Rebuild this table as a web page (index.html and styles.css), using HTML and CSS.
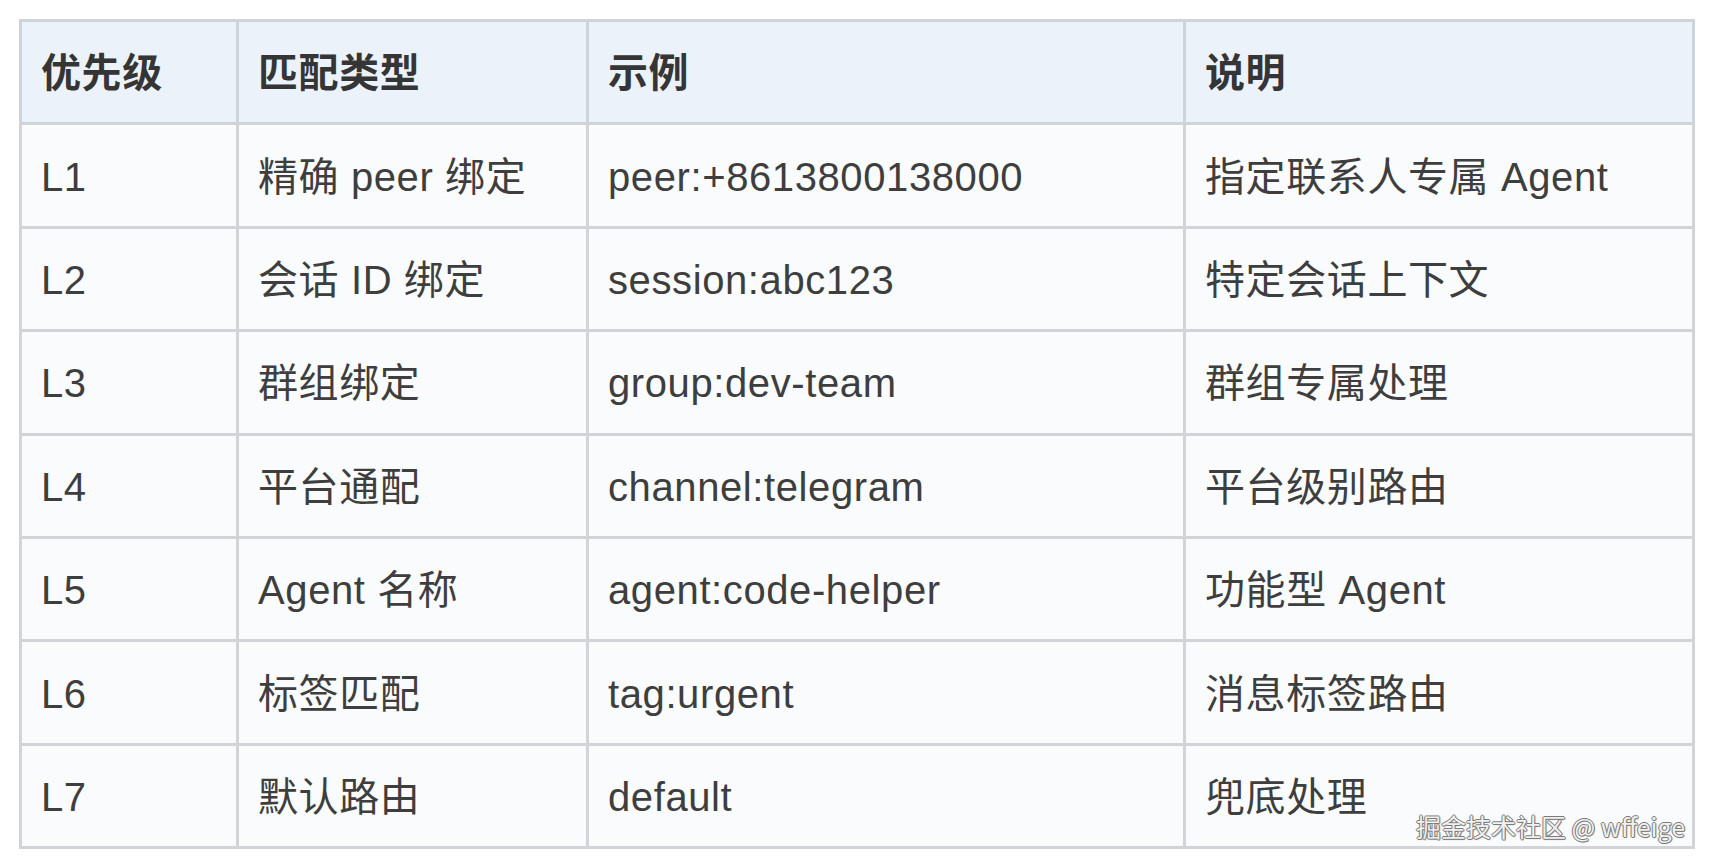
FILE: index.html
```html
<!DOCTYPE html>
<html lang="zh-CN">
<head>
<meta charset="utf-8">
<title>路由优先级</title>
<link rel="stylesheet" href="styles.css">
</head>
<body>
<div class="wrap">
  <table class="route-table">
    <colgroup>
      <col class="c1"><col class="c2"><col class="c3"><col class="c4">
    </colgroup>
    <thead>
      <tr><th>优先级</th><th>匹配类型</th><th>示例</th><th>说明</th></tr>
    </thead>
    <tbody>
      <tr><td>L1</td><td>精确 peer 绑定</td><td>peer:+8613800138000</td><td>指定联系人专属 Agent</td></tr>
      <tr><td>L2</td><td>会话 ID 绑定</td><td>session:abc123</td><td>特定会话上下文</td></tr>
      <tr><td>L3</td><td>群组绑定</td><td>group:dev-team</td><td>群组专属处理</td></tr>
      <tr><td>L4</td><td>平台通配</td><td>channel:telegram</td><td>平台级别路由</td></tr>
      <tr><td>L5</td><td>Agent 名称</td><td>agent:code-helper</td><td>功能型 Agent</td></tr>
      <tr><td>L6</td><td>标签匹配</td><td>tag:urgent</td><td>消息标签路由</td></tr>
      <tr><td>L7</td><td>默认路由</td><td>default</td><td>兜底处理</td></tr>
    </tbody>
  </table>
  <div class="watermark">掘金技术社区 @ wffeige</div>
</div>
</body>
</html>
```

FILE: styles.css
```css
html, body {
  margin: 0;
  padding: 0;
  background: #ffffff;
}

body {
  font-family: "Liberation Sans", "Noto Sans CJK SC", sans-serif;
  color: #3b3b3b;
}

.wrap {
  position: relative;
  width: 1673px;
  margin: 19px 0 0 19px;
}

.route-table {
  border-collapse: collapse;
  table-layout: fixed;
  width: 1673px;
  border: 3px solid #d2d4d7;
  background: #f9fbfd;
}

.c1 { width: 217px; }
.c2 { width: 350px; }
.c3 { width: 597px; }
.c4 { width: 509px; }

.route-table th,
.route-table td {
  border: 3px solid #d2d4d7;
  height: 98.4px;
  padding: 2px 0 0 19px;
  text-align: left;
  vertical-align: middle;
  font-size: 40px;
  line-height: 48px;
  letter-spacing: 0.6px;
  white-space: nowrap;
}

.route-table th {
  background: #ebf2fa;
  font-weight: 700;
  color: #353535;
  border-color: #cfd4da;
}

.route-table td {
  font-weight: 400;
  color: #3e3e3e;
}

.watermark {
  position: absolute;
  right: 7px;
  bottom: 8px;
  font-family: "Noto Sans CJK SC", "Liberation Sans", sans-serif;
  font-size: 25px;
  line-height: 30px;
  color: #f0f0f0;
  text-shadow:
    1px 0 0 #7a7a7a,
    -1px 0 0 #7a7a7a,
    0 1px 0 #7a7a7a,
    0 -1px 0 #7a7a7a,
    1px 1px 1px #9a9a9a;
}
```
